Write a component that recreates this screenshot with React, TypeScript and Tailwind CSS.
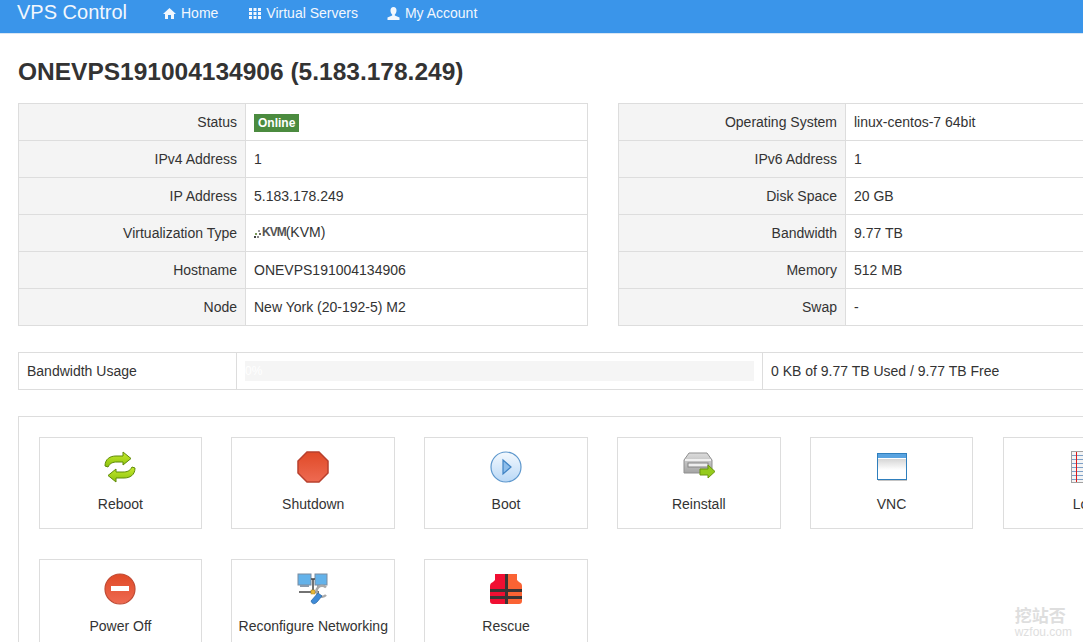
import type { ReactNode } from "react";

const left = [
  ["Status", <span key="s" className="inline-block h-[18px] bg-[#4b8b3f] px-[4px] text-[12px] font-bold leading-[18px] text-white align-middle">Online</span>],
  ["IPv4 Address", "1"],
  ["IP Address", "5.183.178.249"],
  ["Virtualization Type", <KvmLabel key="k" />],
  ["Hostname", "ONEVPS191004134906"],
  ["Node", "New York (20-192-5) M2"],
];

const right = [
  ["Operating System", "linux-centos-7 64bit"],
  ["IPv6 Address", "1"],
  ["Disk Space", "20 GB"],
  ["Bandwidth", "9.77 TB"],
  ["Memory", "512 MB"],
  ["Swap", "-"],
];

function KvmLabel() {
  return (
    <span className="inline-flex items-center">
      <svg width="8" height="10" viewBox="0 0 8 10" className="mt-[3px]">
        <rect x="4" y="1" width="2" height="2" fill="#9a9a9a" />
        <rect x="1" y="4" width="2" height="2" fill="#7a9a5a" />
        <rect x="5" y="4" width="2" height="2" fill="#666" />
        <rect x="0" y="7" width="2" height="2" fill="#444" />
        <rect x="3" y="7" width="2" height="2" fill="#888" />
      </svg>
      <span className="text-[12px] font-bold tracking-[-1px] text-[#555]">KVM</span>
      (KVM)
    </span>
  );
}

function InfoTable({ rows }: { rows: (string | ReactNode)[][] }) {
  return (
    <table className="w-[570px] shrink-0 border-collapse">
      <tbody>
        {rows.map((row, i) => (
          <tr key={i} className="h-[37px]">
            <td className="w-[227px] border border-[#ddd] bg-[#f4f4f4] px-2 text-right">{row[0]}</td>
            <td className="border border-[#ddd] px-2">{row[1]}</td>
          </tr>
        ))}
      </tbody>
    </table>
  );
}

function RebootIcon() {
  return (
    <svg width="32" height="32" viewBox="0 0 32 32">
      <defs>
        <linearGradient id="rb" x1="0" y1="0" x2="0" y2="1">
          <stop offset="0" stopColor="#c6ea2e" />
          <stop offset="1" stopColor="#8cc20c" />
        </linearGradient>
      </defs>
      <path d="M1 15C1 8 6 5 12 5H19V1L27 7.500L19 14V11H13C9 11 6 12 4 16Z" fill="url(#rb)" stroke="#5f8a08" strokeWidth="1" />
      <path d="M31 17C31 24 26 27 20 27H12V31L4 24.500L12 18V21H19C23 21 26 20 28 16Z" fill="url(#rb)" stroke="#5f8a08" strokeWidth="1" />
    </svg>
  );
}

function StopIcon() {
  return (
    <svg width="32" height="32" viewBox="0 0 32 32">
      <defs>
        <linearGradient id="st" x1="0" y1="0" x2="0" y2="1">
          <stop offset="0" stopColor="#e04a27" />
          <stop offset="1" stopColor="#ee6a52" />
        </linearGradient>
      </defs>
      <path d="M10 1H22L31 10V22L22 31H10L1 22V10Z" fill="url(#st)" stroke="#b8402e" strokeWidth="1.500" />
    </svg>
  );
}

function BootIcon() {
  return (
    <svg width="32" height="32" viewBox="0 0 32 32">
      <defs>
        <linearGradient id="bt" x1="0" y1="0" x2="0" y2="1">
          <stop offset="0" stopColor="#f4f9fe" />
          <stop offset="1" stopColor="#b9d8f6" />
        </linearGradient>
      </defs>
      <circle cx="16" cy="16" r="15" fill="url(#bt)" stroke="#5d97cd" strokeWidth="1.200" />
      <path d="M13 9L21 16L13 23Z" fill="#8dbdea" stroke="#3f83c4" strokeWidth="1.200" />
    </svg>
  );
}

function ReinstallIcon() {
  return (
    <svg width="32" height="32" viewBox="0 0 32 32">
      <defs>
        <linearGradient id="ri" x1="0" y1="0" x2="0" y2="1">
          <stop offset="0" stopColor="#dcdcdc" />
          <stop offset="1" stopColor="#a4a4a4" />
        </linearGradient>
      </defs>
      <path d="M6 2H24L29 9V22H1V9Z" fill="url(#ri)" stroke="#8f8f8f" strokeWidth="1" />
      <rect x="2" y="8" width="26" height="2" fill="#f0f0f0" />
      <rect x="5" y="12" width="20" height="4" fill="#eee" stroke="#858585" strokeWidth="1" />
      <path d="M17 18H25V14L32 20.500L25 27V24H17Z" fill="#95cb1c" stroke="#6a950e" strokeWidth="1" />
    </svg>
  );
}

function VncIcon() {
  return (
    <svg width="30" height="28" viewBox="0 0 30 28">
      <defs>
        <linearGradient id="vn" x1="0" y1="0" x2="0" y2="1">
          <stop offset="0" stopColor="#d6d6d6" />
          <stop offset="1" stopColor="#ffffff" />
        </linearGradient>
      </defs>
      <rect x="0.500" y="0.500" width="29" height="26" fill="#fff" stroke="#2f7fbd" />
      <rect x="1" y="1" width="28" height="4" fill="#59a3e0" />
      <rect x="1" y="6" width="28" height="11" fill="url(#vn)" />
      <rect x="1" y="27" width="29" height="1" fill="#c4c4c4" />
    </svg>
  );
}

function LogIcon() {
  return (
    <svg width="30" height="32" viewBox="0 0 30 32" className="ml-[4px]">
      <rect x="0.500" y="0.500" width="29" height="31" fill="#f4f4f4" stroke="#a2a2a2" />
      {[4, 8, 12, 16, 20, 24, 28].map((y) => (
        <rect key={y} x="1" y={y} width="28" height="1" fill="#7c9fc6" />
      ))}
      <rect x="5" y="1" width="1" height="30" fill="#e01818" />
    </svg>
  );
}

function PowerOffIcon() {
  return (
    <svg width="32" height="32" viewBox="0 0 32 32">
      <defs>
        <linearGradient id="po" x1="0" y1="0" x2="0" y2="1">
          <stop offset="0" stopColor="#e04a27" />
          <stop offset="1" stopColor="#ee6a52" />
        </linearGradient>
      </defs>
      <circle cx="16" cy="16" r="15" fill="url(#po)" stroke="#bf4a33" strokeWidth="1.200" />
      <rect x="7" y="13" width="18" height="5" fill="#fff" />
    </svg>
  );
}

function NetworkIcon() {
  return (
    <svg width="32" height="32" viewBox="0 0 32 32">
      <rect x="1" y="1" width="13" height="11" fill="#63b2ea" stroke="#7b8ca0" strokeWidth="1" />
      <rect x="18" y="1" width="12" height="11" fill="#63b2ea" stroke="#7b8ca0" strokeWidth="1" />
      <rect x="3" y="12" width="9" height="2" fill="#8a9bad" />
      <rect x="20" y="12" width="8" height="2" fill="#8a9bad" />
      <path d="M14 6H18M16 6V19M2 19H22" stroke="#444" strokeWidth="1.500" fill="none" />
      <rect x="14" y="17" width="4" height="4" fill="#e8b93a" stroke="#a88420" strokeWidth="0.500" />
      <path d="M29 14.500A5.500 5.500 0 1 0 29 22" fill="none" stroke="#a8a8a8" strokeWidth="2.500" />
      <path d="M21 20L14 28Q16 33 20 29L25 23Z" fill="#3f8bd8" stroke="#2a69a8" strokeWidth="0.800" />
    </svg>
  );
}

function RescueIcon() {
  return (
    <svg width="32" height="32" viewBox="0 0 32 32">
      <path d="M5 1H15V31H3Q0 31 0 28V13Q0 10 3 9L5 7Z" fill="#f00f32" />
      <path d="M18 1H27V7L29 9Q32 10 32 13V28Q32 31 29 31H18Z" fill="#fa6334" />
      <rect x="15" y="1" width="3" height="30" fill="#3a3535" />
      <rect x="0" y="16" width="32" height="3" fill="#3a3535" />
      <rect x="0" y="23" width="32" height="3" fill="#3a3535" />
    </svg>
  );
}

const actions: [string, ReactNode][] = [
  ["Reboot", <RebootIcon key="a" />],
  ["Shutdown", <StopIcon key="b" />],
  ["Boot", <BootIcon key="c" />],
  ["Reinstall", <ReinstallIcon key="d" />],
  ["VNC", <VncIcon key="e" />],
  ["Log", <LogIcon key="f" />],
  ["Power Off", <PowerOffIcon key="g" />],
  ["Reconfigure Networking", <NetworkIcon key="h" />],
  ["Rescue", <RescueIcon key="i" />],
];

export default function App() {
  return (
    <div className="relative h-[642px] w-[1083px] overflow-hidden bg-white font-['Liberation_Sans',Arial,sans-serif] text-sm text-[#333]">
      {/* Navbar */}
      <nav className="flex h-[34px] items-center border-b border-[#d9e6f3] bg-[#3a95ea] pb-[7px] text-[#f2f7fd]">
        <span className="mb-[2px] ml-[17px] w-[146px] text-[20px]">VPS Control</span>
        <a className="flex items-center gap-[5px]">
          <svg width="13" height="13" viewBox="0 0 13 13" fill="currentColor">
            <path d="M6.500 1L13 7H11V12H8V8H5V12H2V7H0L6.500 1Z" />
          </svg>
          Home
        </a>
        <a className="ml-[31px] flex items-center gap-[5px]">
          <svg width="12" height="12" viewBox="0 0 12 12" fill="currentColor">
            <path d="M0 1h3v3H0zM4.500 1h3v3h-3zM9 1h3v3H9zM0 5h3v3H0zM4.500 5h3v3h-3zM9 5h3v3H9zM0 9h3v3H0zM4.500 9h3v3h-3zM9 9h3v3H9z" />
          </svg>
          Virtual Servers
        </a>
        <a className="ml-[29px] flex items-center gap-[5px]">
          <svg width="13" height="13" viewBox="0 0 13 13" fill="currentColor">
            <path d="M6.500 0C8.500 0 9.500 1.500 9.500 3.500C9.500 5.500 8.500 7 7.800 7.500V8.500L12.500 10.500V13H0.500V10.500L5.200 8.500V7.500C4.500 7 3.500 5.500 3.500 3.500C3.500 1.500 4.500 0 6.500 0Z" />
          </svg>
          My Account
        </a>
      </nav>

      <main className="pl-[18px]">
        <h1 className="mt-[23px] text-[24.500px] font-bold leading-[30px]">ONEVPS191004134906 (5.183.178.249)</h1>

        <div className="mt-[16px] flex gap-[30px]">
          <InfoTable rows={left} />
          <InfoTable rows={right} />
        </div>

        {/* Bandwidth */}
        <table className="mt-[26px] w-[1140px] border-collapse">
          <tbody>
            <tr className="h-[37px]">
              <td className="w-[218px] border border-[#ddd] px-2">Bandwidth Usage</td>
              <td className="w-[526px] border border-[#ddd] px-2">
                <div className="h-[20px] bg-[#f5f5f5] text-xs leading-[20px] text-white">0%</div>
              </td>
              <td className="border border-[#ddd] px-2">0 KB of 9.77 TB Used / 9.77 TB Free</td>
            </tr>
          </tbody>
        </table>

        {/* Actions */}
        <div className="mt-[26px] grid w-[1200px] grid-cols-[repeat(6,163.700px)] gap-x-[29.100px] gap-y-[30px] border border-[#ddd] pl-[19.600px] pt-5 pb-5">
          {actions.map(([label, icon]) => (
            <div key={label} className="flex h-[92px] flex-col items-center border border-[#ddd] pt-[13px]">
              <div className="flex h-[32px] items-center justify-center">{icon}</div>
              <span className="mt-[11px] whitespace-nowrap leading-5">{label}</span>
            </div>
          ))}
        </div>
      </main>

      {/* Watermark */}
      <div className="absolute bottom-[3px] right-[11px] flex flex-col items-start text-[#dedede]">
        <span className="font-['Noto_Sans_CJK_SC',sans-serif] text-[17px] font-bold leading-[22px]">挖站否</span>
        <span className="text-[12px] leading-[13px]">wzfou.com</span>
      </div>
    </div>
  );
}
